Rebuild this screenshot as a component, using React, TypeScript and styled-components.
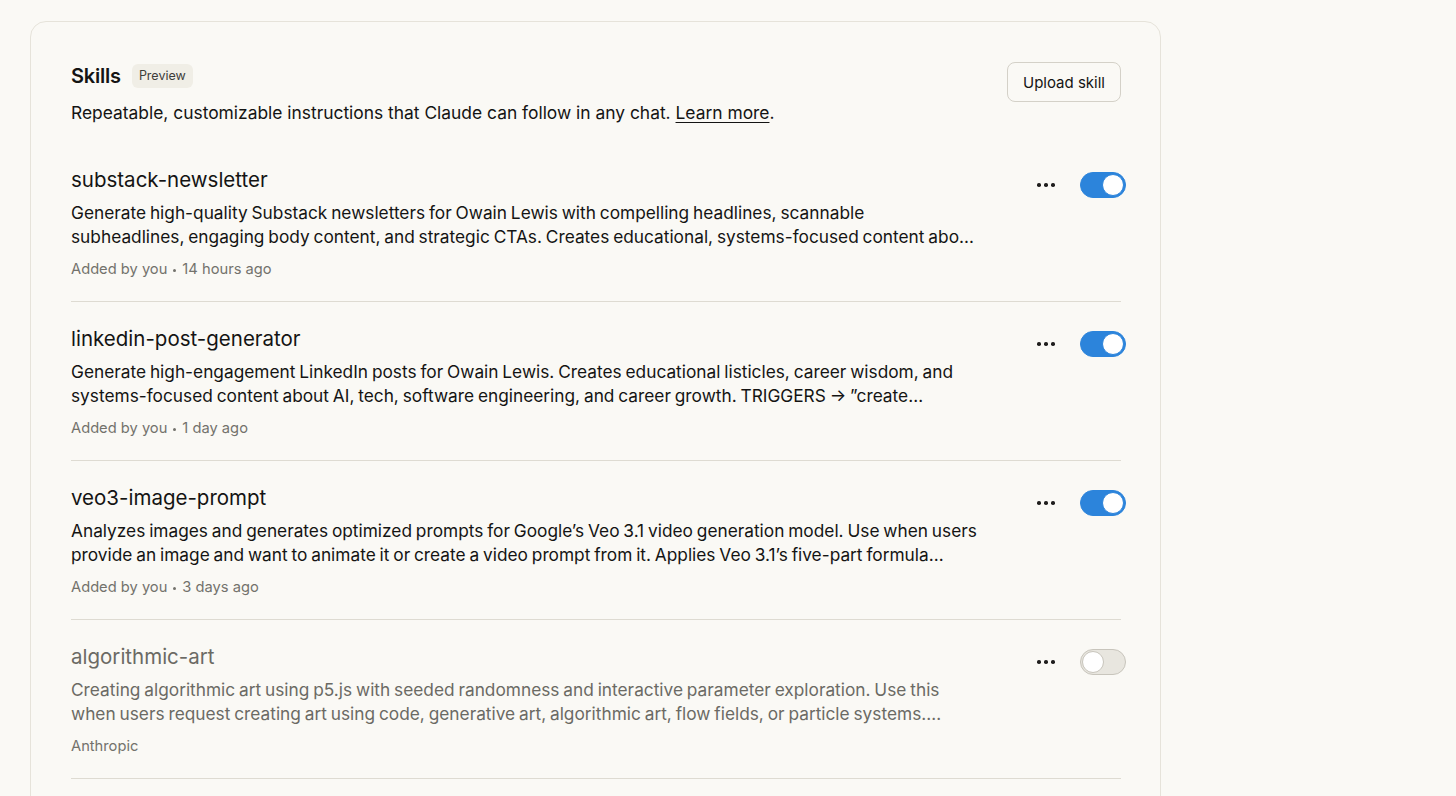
import React from 'react';
import styled, { createGlobalStyle } from 'styled-components';

const GlobalStyle = createGlobalStyle`
  html, body {
    margin: 0;
    padding: 0;
    background: #faf9f5;
  }
  body {
    font-family: 'Inter', 'Open Sans', sans-serif;
    color: #141413;
    -webkit-font-smoothing: antialiased;
  }
`;

const Page = styled.div`
  padding: 21px 0 0 30px;
  height: 796px;
  overflow: hidden;
  box-sizing: border-box;
`;

const Card = styled.section`
  width: 1131px;
  box-sizing: border-box;
  border: 1px solid #e6e3da;
  border-radius: 16px;
  padding: 40px 39px 0 40px;
  background: #faf9f5;
  min-height: 900px;
`;

const Header = styled.div`
  display: flex;
  justify-content: space-between;
  align-items: flex-start;
  margin-bottom: 18px;
`;

const TitleRow = styled.div`
  display: flex;
  align-items: center;
  gap: 11px;
  height: 28px;
`;

const Title = styled.h1`
  margin: 0;
  font-size: 20px;
  font-weight: 600;
  letter-spacing: -0.2px;
`;

const Badge = styled.span`
  font-size: 12.5px;
  line-height: 24px;
  padding: 0 7px;
  border-radius: 6px;
  background: #f0eee6;
  color: #3d3d3a;
`;

const Intro = styled.p`
  margin: 11px 0 0;
  font-size: 17.4px;
  line-height: 24px;
  color: #141413;

  a {
    color: inherit;
    text-decoration: underline;
    text-underline-offset: 3px;
  }
`;

const UploadButton = styled.button`
  height: 40px;
  padding: 0 15px;
  border: 1px solid #d4d1c8;
  border-radius: 8px;
  background: #faf9f5;
  font-family: inherit;
  font-size: 15px;
  color: #141413;
  cursor: pointer;
`;

const List = styled.div`
  display: flex;
  flex-direction: column;
`;

const Item = styled.div<{ $off?: boolean }>`
  display: flex;
  align-items: flex-start;
  gap: 51px;
  padding: 23px 0 22px;
  border-bottom: 1px solid #dedbd2;
  color: ${p => (p.$off ? '#6b6a64' : '#141413')};
`;

const ItemBody = styled.div`
  flex: 1;
  min-width: 0;
`;

const ItemName = styled.div`
  font-size: 20.5px;
  line-height: 28px;
`;

const ItemDesc = styled.div`
  margin-top: 7px;
  font-size: 17.3px;
  line-height: 24px;
  word-spacing: -1px;
  display: -webkit-box;
  -webkit-line-clamp: 2;
  -webkit-box-orient: vertical;
  overflow: hidden;
`;

const Meta = styled.div`
  margin-top: 10px;
  font-size: 14.7px;
  line-height: 20px;
  color: #73726c;
  display: flex;
  align-items: center;
  gap: 6px;
`;

const Dot = styled.span`
  width: 3px;
  height: 3px;
  border-radius: 50%;
  background: #73726c;
  margin-top: 3px;
`;

const Controls = styled.div`
  margin-left: auto;
  margin-right: -5px;
  display: flex;
  align-items: center;
  gap: 18px;
  padding-top: 6px;
`;

const MoreButton = styled.button`
  width: 32px;
  height: 26px;
  border: 0;
  background: transparent;
  display: flex;
  align-items: center;
  justify-content: center;
  gap: 3.5px;
  padding: 0;
  cursor: pointer;

  span {
    width: 3.5px;
    height: 3.5px;
    border-radius: 50%;
    background: #1f1e1d;
  }
`;

const Toggle = styled.div<{ $on: boolean }>`
  width: 46px;
  height: 26px;
  box-sizing: border-box;
  border-radius: 13px;
  background: ${p => (p.$on ? '#2c84db' : '#e8e6df')};
  border: 1px solid ${p => (p.$on ? '#2c84db' : '#c8c5bc')};
  display: flex;
  align-items: center;
  justify-content: ${p => (p.$on ? 'flex-end' : 'flex-start')};
  padding: 1px;

  &::after {
    content: '';
    width: 20px;
    height: 20px;
    border-radius: 50%;
    background: #fff;
    border: 1px solid ${p => (p.$on ? '#2c84db' : '#c8c5bc')};
  }
`;

type Skill = {
  name: string;
  desc: string;
  by: string;
  when?: string;
  on: boolean;
};

const skills: Skill[] = [
  {
    name: 'substack-newsletter',
    desc:
      'Generate high-quality Substack newsletters for Owain Lewis with compelling headlines, scannable subheadlines, engaging body content, and strategic CTAs. Creates educational, systems-focused content about AI, tech, software engineering, and career growth.',
    by: 'Added by you',
    when: '14 hours ago',
    on: true,
  },
  {
    name: 'linkedin-post-generator',
    desc:
      'Generate high-engagement LinkedIn posts for Owain Lewis. Creates educational listicles, career wisdom, and systems-focused content about AI, tech, software engineering, and career growth. TRIGGERS \u2192 \u201dcreate LinkedIn post\u201d, \u201dwrite a LinkedIn post\u201d.',
    by: 'Added by you',
    when: '1 day ago',
    on: true,
  },
  {
    name: 'veo3-image-prompt',
    desc:
      'Analyzes images and generates optimized prompts for Google\u2019s Veo 3.1 video generation model. Use when users provide an image and want to animate it or create a video prompt from it. Applies Veo 3.1\u2019s five-part formula (camera, subject, action, context, style).',
    by: 'Added by you',
    when: '3 days ago',
    on: true,
  },
  {
    name: 'algorithmic-art',
    desc:
      'Creating algorithmic art using p5.js with seeded randomness and interactive parameter exploration. Use this when users request creating art using code, generative art, algorithmic art, flow fields, or particle systems. Create original algorithmic art rather than copying.',
    by: 'Anthropic',
    on: false,
  },
];

const App: React.FC = () => {
  return (
    <Page>
      <GlobalStyle />
      <Card>
        <Header>
          <div>
            <TitleRow>
              <Title>Skills</Title>
              <Badge>Preview</Badge>
            </TitleRow>
            <Intro>
              Repeatable, customizable instructions that Claude can follow in any chat.{' '}
              <a href="#">Learn more</a>.
            </Intro>
          </div>
          <UploadButton>Upload skill</UploadButton>
        </Header>

        <List>
          {skills.map(s => (
            <Item key={s.name} $off={!s.on}>
              <ItemBody>
                <ItemName>{s.name}</ItemName>
                <ItemDesc>{s.desc}</ItemDesc>
                <Meta>
                  <span>{s.by}</span>
                  {s.when && (
                    <>
                      <Dot />
                      <span>{s.when}</span>
                    </>
                  )}
                </Meta>
              </ItemBody>
              <Controls>
                <MoreButton aria-label="More">
                  <span />
                  <span />
                  <span />
                </MoreButton>
                <Toggle $on={s.on} />
              </Controls>
            </Item>
          ))}
        </List>
      </Card>
    </Page>
  );
};

export default App;
